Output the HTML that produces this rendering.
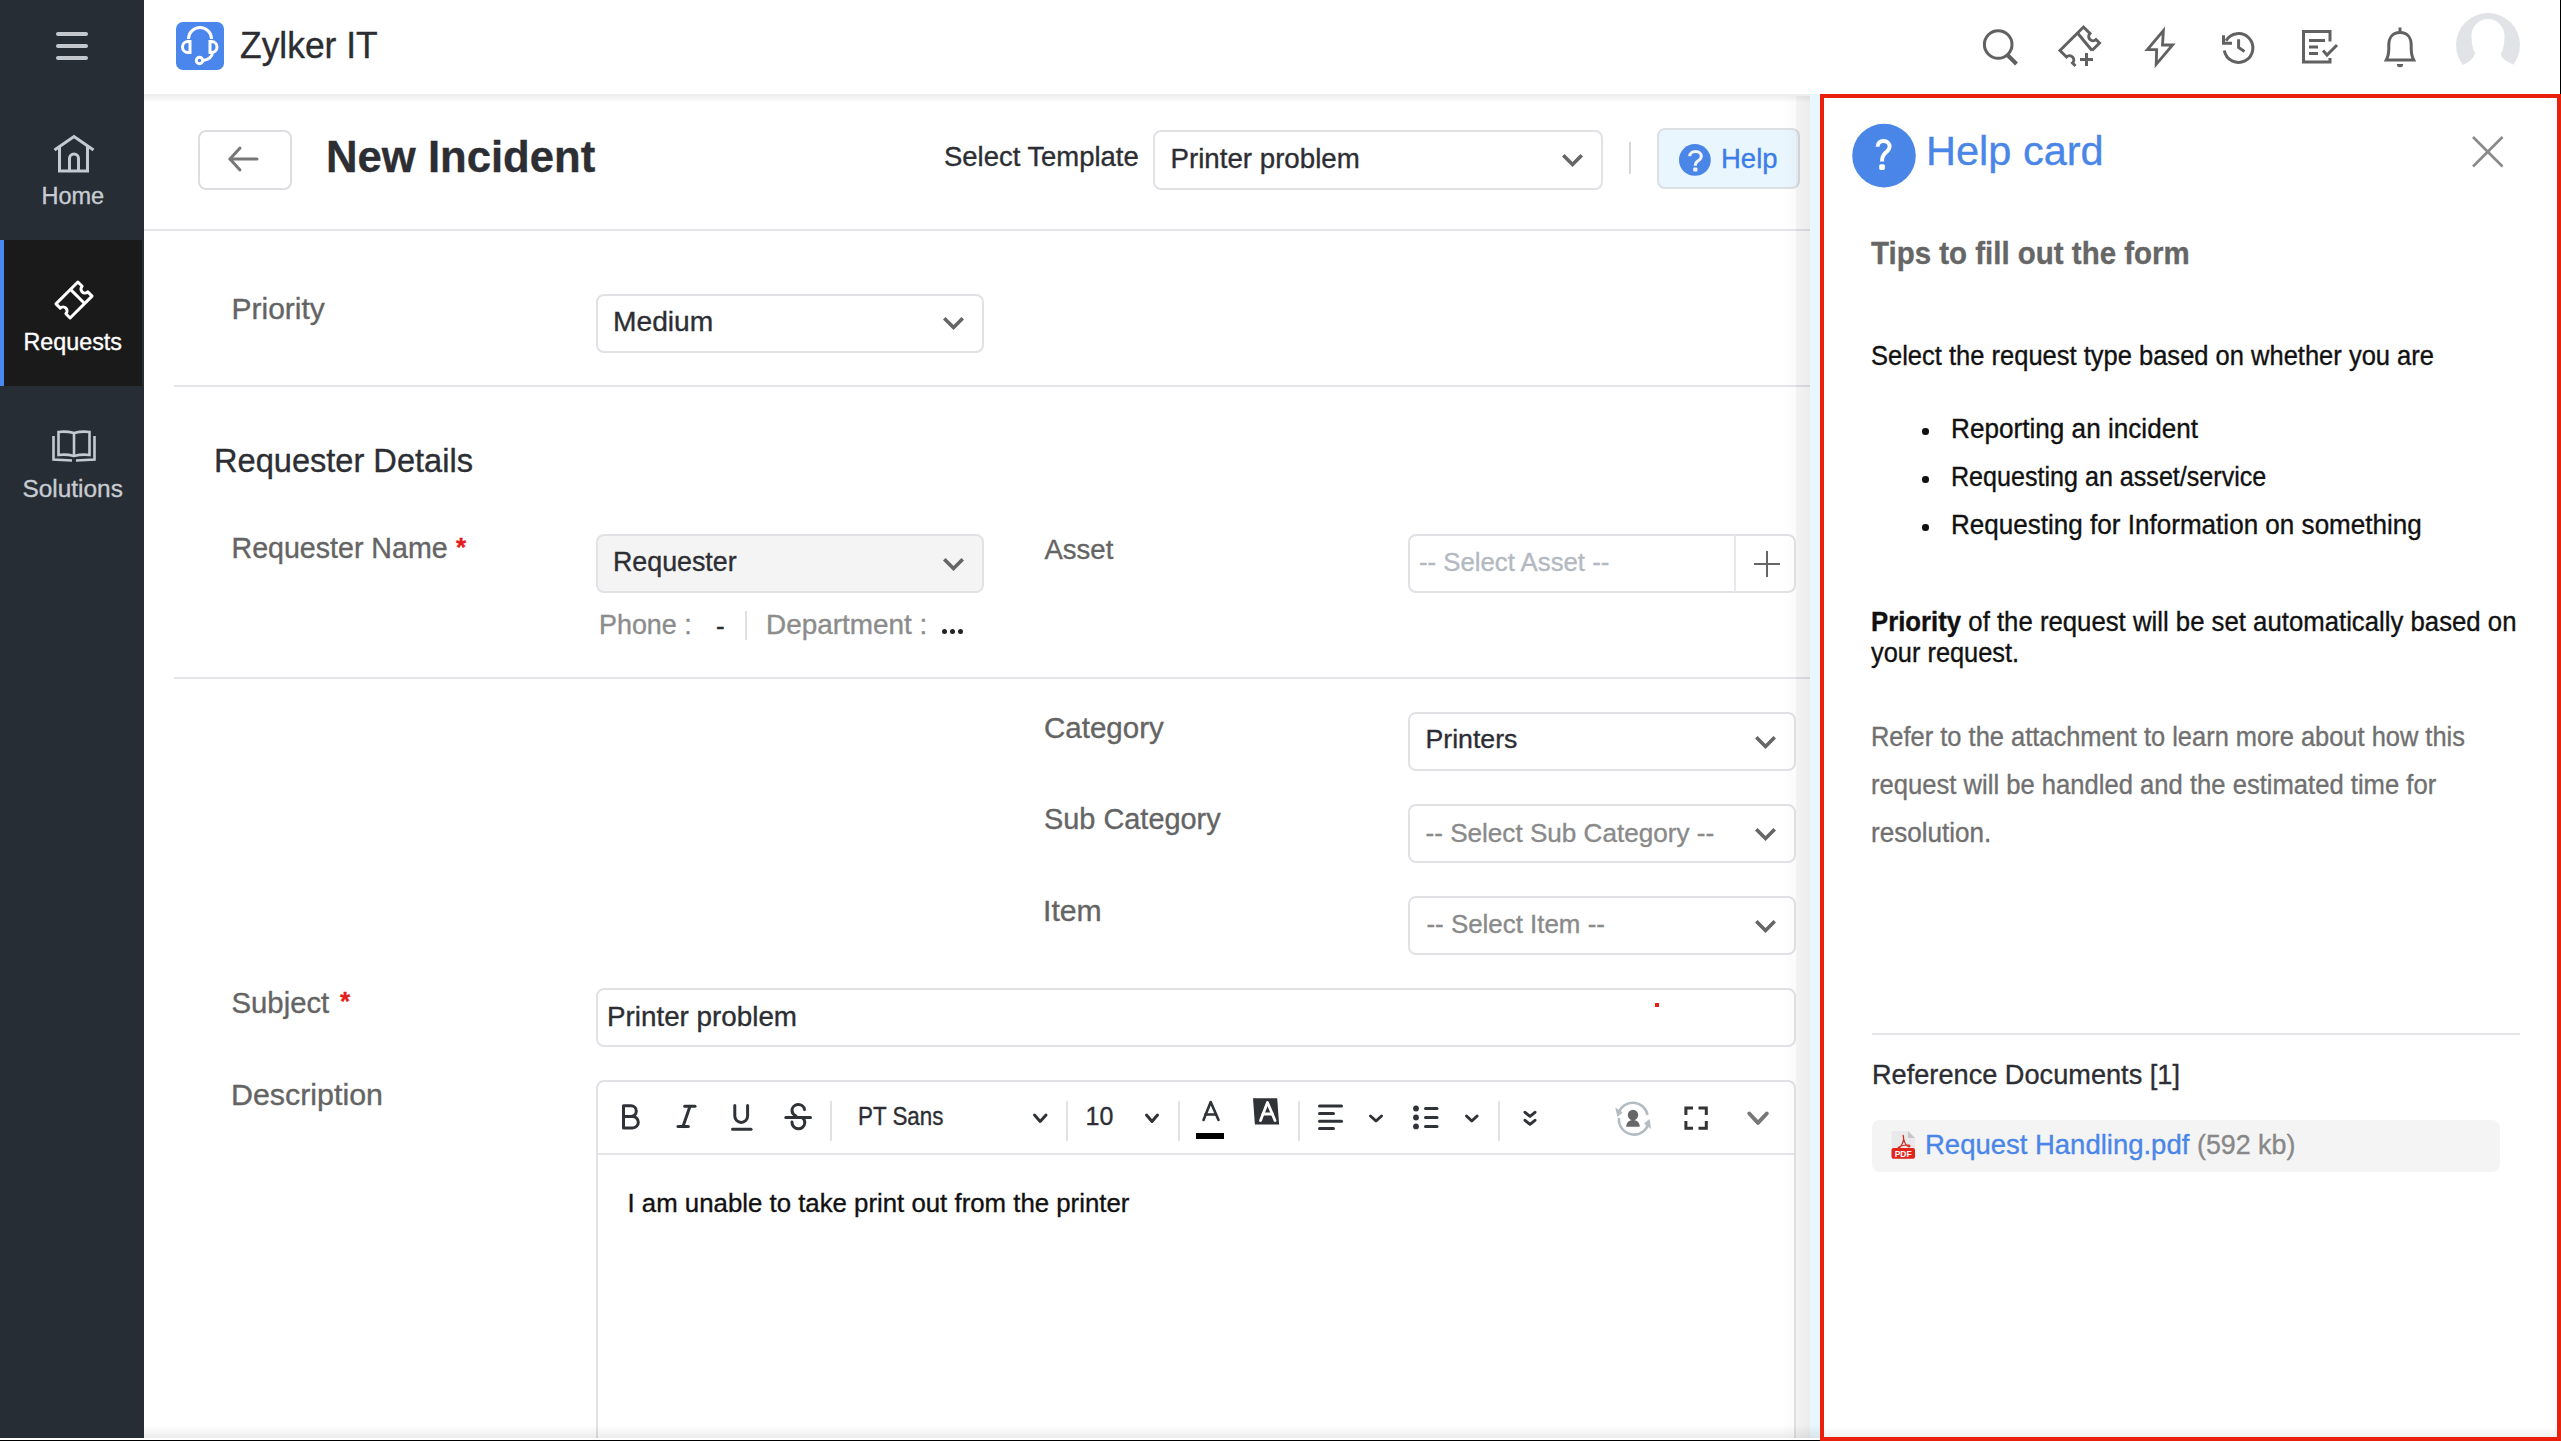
<!DOCTYPE html>
<html><head><meta charset="utf-8"><title>New Incident</title>
<style>
html,body{margin:0;padding:0;}
body{width:2561px;height:1441px;overflow:hidden;position:relative;background:#fff;font-family:"Liberation Sans", sans-serif;}
.t{position:absolute;white-space:nowrap;line-height:1;-webkit-text-stroke:0.35px currentColor;}
.r{position:absolute;box-sizing:border-box;}
svg.r{overflow:visible;}
</style></head><body>
<div class="r" style="left:0px;top:0px;width:144px;height:1438px;background:#262d35"></div>
<div class="r" style="left:56px;top:32px;width:32px;height:4px;background:#c3c8cf;border-radius:2px"></div>
<div class="r" style="left:56px;top:44px;width:32px;height:4px;background:#c3c8cf;border-radius:2px"></div>
<div class="r" style="left:56px;top:56px;width:32px;height:4px;background:#c3c8cf;border-radius:2px"></div>
<svg class="r" style="left:50px;top:130px;" width="48" height="48" viewBox="0 0 48 48"><g fill="none" stroke="#c5cad1" stroke-width="3"><polyline points="4.5,20 24,6.5 43.5,20"/><polyline points="9.5,16 9.5,41 37.5,41 37.5,16"/><path d="M19.5,41 V28.5 A4.5,4.5 0 0 1 28.5,28.5 V41"/></g></svg>
<div class="t" style="left:41.5px;top:185.1px;font-size:23.5px;color:#c8ccd2;font-weight:400;">Home</div>
<div class="r" style="left:0px;top:240px;width:142px;height:146px;background:#1a1a1a"></div>
<div class="r" style="left:0px;top:240px;width:4px;height:146px;background:#4a89f0"></div>
<svg class="r" style="left:50px;top:276px;" width="48" height="48" viewBox="0 0 48 48"><g transform="translate(24,24) rotate(-45)" fill="none" stroke="#fff" stroke-width="3" stroke-linejoin="round"><path d="M-15.5,-10 H15.5 V-4 A4,4 0 0 0 15.5,4 V10 H-15.5 V4 A4,4 0 0 0 -15.5,-4 Z"/><line x1="5" y1="-10" x2="5" y2="10"/></g></svg>
<div class="t" style="left:23.5px;top:330.6px;font-size:23.3px;color:#ffffff;font-weight:400;">Requests</div>
<svg class="r" style="left:50px;top:426px;" width="48" height="40" viewBox="0 0 48 40"><g fill="none" stroke="#c5cad1" stroke-width="2.6"><path d="M8.5,6 Q16,5 24,7 Q32,5 39.5,6 V29 Q32,28 24,30 Q16,28 8.5,29 Z"/><line x1="24" y1="7" x2="24" y2="30"/><polyline points="3.5,10 3.5,33.5 22,34.5"/><polyline points="44.5,10 44.5,33.5 26,34.5"/></g></svg>
<div class="t" style="left:22.5px;top:476.5px;font-size:24.4px;color:#c8ccd2;font-weight:400;">Solutions</div>
<div class="r" style="left:144px;top:94px;width:1676px;height:8px;background:linear-gradient(#ececec,#f3f3f3 45%,#fdfdfd)"></div>
<div class="r" style="left:2560px;top:0px;width:1px;height:94px;background:#000"></div>
<div class="r" style="left:176px;top:22px;width:48px;height:48px;background:#4a86eb;border-radius:7px"></div>
<svg class="r" style="left:176px;top:22px;" width="48" height="48" viewBox="0 0 48 48"><g fill="none" stroke="#fff" stroke-width="3"><path d="M12.5,17 A11.5,11.5 0 0 1 35.5,17"/><path d="M14,19.5 V30.5 H12 A5.5,5.5 0 0 1 12,19.5 Z"/><path d="M34,19.5 V30.5 H35.5 A5.5,5.5 0 0 0 35.5,19.5 Z"/><path d="M36.5,30.5 Q36,37 27,38.5"/><circle cx="23.5" cy="38.5" r="3.2"/></g></svg>
<div class="t" style="left:240.0px;top:28.1px;font-size:36.5px;color:#2b2d31;font-weight:400;transform:scaleX(0.97);transform-origin:0 0;">Zylker IT</div>
<svg class="r" style="left:1976px;top:20px;" width="48" height="52" viewBox="0 0 48 52"><g fill="none" stroke="#616161" stroke-width="3"><circle cx="22.2" cy="24.5" r="13.8"/></g><line x1="31.5" y1="35" x2="40.5" y2="44" stroke="#616161" stroke-width="4"/></svg>
<svg class="r" style="left:2050px;top:18px;" width="60" height="56" viewBox="0 0 60 56"><g fill="none" stroke="#616161" stroke-width="3" stroke-linejoin="miter"><path d="M25.5,48 L22.5,45 A4.2,4.2 0 0 0 16.5,39 L10,32.5 L33.5,9 L40,15.5 A4.2,4.2 0 0 0 46,21.5 L49.5,25 L42,32.5"/><line x1="27.5" y1="15" x2="42" y2="32.5"/></g><g stroke="#616161" stroke-width="3"><line x1="30" y1="41.5" x2="43" y2="41.5"/><line x1="36.5" y1="35" x2="36.5" y2="48"/></g></svg>
<svg class="r" style="left:2140px;top:22px;" width="40" height="50" viewBox="0 0 40 50"><path d="M24,5.5 L5,28 L16,28 L15.5,45.5 L35,22.5 L23,22.5 Z" transform="translate(20,25.5) scale(0.84) translate(-20,-25.5)" fill="none" stroke="#616161" stroke-width="3.4" stroke-linejoin="miter"/></svg>
<svg class="r" style="left:2214px;top:22px;" width="50" height="50" viewBox="0 0 50 50"><g fill="none" stroke="#616161" stroke-width="3"><path d="M10.3,28.5 A14.4,14.4 0 1 0 12,18.8"/><polyline points="9.5,13.3 9.5,21.3 18,21.3"/><polyline points="24.6,17.3 24.6,25.5 30.5,29.5"/></g></svg>
<svg class="r" style="left:2294px;top:22px;" width="50" height="50" viewBox="0 0 50 50"><g fill="none" stroke="#616161" stroke-width="3"><polyline points="36,19.5 36,9.5 9.5,9.5 9.5,40 36,40 36,36"/></g><g stroke="#616161" stroke-width="3" fill="none"><line x1="15" y1="18.5" x2="31" y2="18.5"/><line x1="15" y1="25" x2="24" y2="25"/><line x1="15" y1="31.5" x2="24" y2="31.5"/><polyline points="29,28.5 33,33 43,23"/></g></svg>
<svg class="r" style="left:2376px;top:22px;" width="50" height="50" viewBox="0 0 50 50"><g fill="none" stroke="#616161" stroke-width="3"><path d="M24,10.5 C16.5,10.5 12.8,16 12.8,23 L12.8,26 C12.8,31 12,35 10.3,38 L37.7,38 C36,35 35.2,31 35.2,26 L35.2,23 C35.2,16 31.5,10.5 24,10.5 Z"/><line x1="24" y1="5.5" x2="24" y2="9.5"/></g><path d="M20.8,42 L27.2,42 A3.2,3.2 0 0 1 20.8,42 Z" fill="#616161"/></svg>
<svg class="r" style="left:2452px;top:8px;" width="72" height="64" viewBox="0 0 72 64"><defs><clipPath id="avc"><rect x="0" y="0" width="72" height="57"/></clipPath></defs><g clip-path="url(#avc)"><circle cx="36" cy="37" r="32" fill="#e1e3e6"/></g><path d="M36,11 C27,11 20,18 19.5,27 C19.5,35 21,42 23,45 C22.5,49 19,53 12,56.5 L8,58 L64,58 L60,56 C53,53 48.5,49 49,45 C51.5,42 52.5,35 52.5,27 C52,18 45,11 36,11 Z" fill="#fff"/></svg>
<div class="r" style="left:198px;top:130px;width:94px;height:60px;border:2px solid #dcdee2;border-radius:8px;background:#fff"></div>
<svg class="r" style="left:226px;top:142px;" width="36" height="36" viewBox="0 0 36 36"><g fill="none" stroke="#777" stroke-width="3" stroke-linecap="round"><polyline points="14,6 4,17 14,28"/><line x1="4.5" y1="17" x2="31" y2="17"/></g></svg>
<div class="t" style="left:326.0px;top:134.9px;font-size:43.66px;color:#2c2e33;font-weight:700;">New Incident</div>
<div class="t" style="left:944.0px;top:142.8px;font-size:27.45px;color:#2c2e33;font-weight:400;">Select Template</div>
<div class="r" style="left:1153px;top:130px;width:450px;height:60px;border:2px solid #e0e2e5;border-radius:8px;background:#fff"></div>
<div class="t" style="left:1170.5px;top:145.1px;font-size:27.7px;color:#2c2e33;font-weight:400;">Printer problem</div>
<svg class="r" style="left:1559px;top:152px;margin-left:0.70px;margin-top:0.35px" width="27" height="19" viewBox="0 0 27 19"><polygon points="12.50,15.05 2.00,4.55 4.55,2.00 12.50,9.95 20.45,2.00 23.00,4.55" fill="#666"/></svg>
<div class="r" style="left:1629px;top:142px;width:2px;height:32px;background:#d8d8d8"></div>
<div class="r" style="left:1657px;top:128px;width:143px;height:61px;border:2px solid #dcdfe3;border-radius:8px;background:#eaf6fd"></div>
<svg class="r" style="left:1679px;top:143px;" width="32" height="34" viewBox="0 0 32 34"><circle cx="15.9" cy="16.9" r="15.9" fill="#4a86e8"/><path d="M10.8,13.2 C10.8,10.2 13.3,8.5 16.6,8.5 C20,8.5 22.3,10.5 22.3,13.2 C22.3,15.8 20.5,16.9 18.8,18.1 C17,19.4 16.3,20.6 16.3,22.8" fill="none" stroke="#f2f2f2" stroke-width="3"/><rect x="14.2" y="24.4" width="4.2" height="4.2" rx="1.2" fill="#f2f2f2"/></svg>
<div class="t" style="left:1721.0px;top:145.1px;font-size:27.5px;color:#3b7de8;font-weight:400;">Help</div>
<div class="r" style="left:144px;top:229px;width:1666px;height:2px;background:#e3e5e8"></div>
<div class="t" style="left:231.5px;top:293.6px;font-size:30px;color:#646464;font-weight:400;">Priority</div>
<div class="r" style="left:596px;top:294px;width:388px;height:59px;border:2px solid #e0e2e5;border-radius:8px;background:#fff"></div>
<div class="t" style="left:613.0px;top:306.6px;font-size:28.2px;color:#2c2e33;font-weight:400;">Medium</div>
<svg class="r" style="left:940px;top:315px;margin-left:0.85px;margin-top:0.45px" width="27" height="19" viewBox="0 0 27 19"><polygon points="12.50,15.05 2.00,4.55 4.55,2.00 12.50,9.95 20.45,2.00 23.00,4.55" fill="#666"/></svg>
<div class="r" style="left:174px;top:385px;width:1636px;height:2px;background:#e3e5e8"></div>
<div class="t" style="left:214.0px;top:445.1px;font-size:32.6px;color:#2c2e33;font-weight:400;">Requester Details</div>
<div class="t" style="left:231.5px;top:534.3px;font-size:28.6px;color:#646464;font-weight:400;">Requester Name</div>
<div class="t" style="left:456.0px;top:533.5px;font-size:26px;color:#e31c1c;font-weight:700;">*</div>
<div class="r" style="left:596px;top:534px;width:388px;height:59px;border:2px solid #e0e2e5;border-radius:8px;background:#f4f4f4"></div>
<div class="t" style="left:613.0px;top:548.5px;font-size:26.8px;color:#2c2e33;font-weight:400;">Requester</div>
<svg class="r" style="left:940px;top:555px;margin-left:0.50px;margin-top:0.95px" width="27" height="19" viewBox="0 0 27 19"><polygon points="12.50,15.05 2.00,4.55 4.55,2.00 12.50,9.95 20.45,2.00 23.00,4.55" fill="#666"/></svg>
<div class="t" style="left:599.0px;top:611.7px;font-size:26.9px;color:#8c8c8c;font-weight:400;">Phone :</div>
<div class="t" style="left:716.0px;top:612.5px;font-size:26px;color:#2c2e33;font-weight:400;">-</div>
<div class="r" style="left:745px;top:611px;width:2px;height:29px;background:#e0e0e0"></div>
<div class="t" style="left:766.0px;top:610.9px;font-size:27.9px;color:#8c8c8c;font-weight:400;">Department :</div>
<div class="r" style="left:942.0px;top:628.5px;width:5px;height:5px;background:#222;border-radius:50%"></div>
<div class="r" style="left:950.0px;top:628.5px;width:5px;height:5px;background:#222;border-radius:50%"></div>
<div class="r" style="left:958.0px;top:628.5px;width:5px;height:5px;background:#222;border-radius:50%"></div>
<div class="r" style="left:174px;top:677px;width:1636px;height:2px;background:#e3e5e8"></div>
<div class="t" style="left:1044.5px;top:535.7px;font-size:27.5px;color:#646464;font-weight:400;">Asset</div>
<div class="r" style="left:1408px;top:534px;width:388px;height:59px;border:2px solid #e0e2e5;border-radius:8px;background:#fff"></div>
<div class="r" style="left:1734px;top:535px;width:2px;height:57px;background:#e6e8eb"></div>
<div class="r" style="left:1754px;top:563px;width:26px;height:2px;background:#666"></div>
<div class="r" style="left:1766px;top:551px;width:2px;height:26px;background:#666"></div>
<div class="t" style="left:1419.0px;top:550.0px;font-size:25.75px;color:#b4b9c1;font-weight:400;">-- Select Asset --</div>
<div class="t" style="left:1044.0px;top:712.5px;font-size:29.5px;color:#646464;font-weight:400;">Category</div>
<div class="r" style="left:1408px;top:712px;width:388px;height:59px;border:2px solid #e0e2e5;border-radius:8px;background:#fff"></div>
<div class="t" style="left:1425.5px;top:726.1px;font-size:26.7px;color:#2c2e33;font-weight:400;">Printers</div>
<svg class="r" style="left:1753px;top:733px;margin-left:0.15px;margin-top:0.65px" width="27" height="19" viewBox="0 0 27 19"><polygon points="12.50,15.05 2.00,4.55 4.55,2.00 12.50,9.95 20.45,2.00 23.00,4.55" fill="#666"/></svg>
<div class="t" style="left:1044.0px;top:805.0px;font-size:28.9px;color:#646464;font-weight:400;">Sub Category</div>
<div class="r" style="left:1408px;top:804px;width:388px;height:59px;border:2px solid #e0e2e5;border-radius:8px;background:#fff"></div>
<div class="t" style="left:1425.5px;top:819.5px;font-size:26.1px;color:#8a8a8a;font-weight:400;">-- Select Sub Category --</div>
<svg class="r" style="left:1753px;top:826px;margin-left:0.15px;margin-top:0.15px" width="27" height="19" viewBox="0 0 27 19"><polygon points="12.50,15.05 2.00,4.55 4.55,2.00 12.50,9.95 20.45,2.00 23.00,4.55" fill="#666"/></svg>
<div class="t" style="left:1043.0px;top:895.8px;font-size:30.2px;color:#646464;font-weight:400;">Item</div>
<div class="r" style="left:1408px;top:896px;width:388px;height:59px;border:2px solid #e0e2e5;border-radius:8px;background:#fff"></div>
<div class="t" style="left:1426.5px;top:912.1px;font-size:25.9px;color:#8a8a8a;font-weight:400;">-- Select Item --</div>
<svg class="r" style="left:1753px;top:918px;margin-left:0.15px;margin-top:0.45px" width="27" height="19" viewBox="0 0 27 19"><polygon points="12.50,15.05 2.00,4.55 4.55,2.00 12.50,9.95 20.45,2.00 23.00,4.55" fill="#666"/></svg>
<div class="t" style="left:231.5px;top:988.3px;font-size:29.3px;color:#646464;font-weight:400;">Subject</div>
<div class="t" style="left:340.0px;top:988.1px;font-size:26px;color:#e31c1c;font-weight:700;">*</div>
<div class="r" style="left:596px;top:988px;width:1200px;height:59px;border:2px solid #e0e2e5;border-radius:8px;background:#fff"></div>
<div class="t" style="left:607.0px;top:1002.5px;font-size:27.8px;color:#2c2e33;font-weight:400;">Printer problem</div>
<div class="r" style="left:1655px;top:1003px;width:4px;height:4px;background:#e8200c"></div>
<div class="t" style="left:231.0px;top:1079.3px;font-size:30.4px;color:#646464;font-weight:400;">Description</div>
<div class="r" style="left:596px;top:1080px;width:1200px;height:380px;border:2px solid #e0e2e5;border-radius:8px;background:#fff"></div>
<div class="r" style="left:598px;top:1153px;width:1196px;height:2px;background:#e3e5e8"></div>
<svg class="r" style="left:612px;top:1096px;" width="40" height="40" viewBox="0 0 40 40"><path d="M11.5,9.8 H19 A5.3,5.3 0 0 1 19,20.4 H11.5 Z M11.5,20.4 H20.5 A5.8,5.8 0 0 1 20.5,32 H11.5 Z" fill="none" stroke="#2f3237" stroke-width="3" stroke-linejoin="round"/></svg>
<svg class="r" style="left:668px;top:1096px;" width="40" height="40" viewBox="0 0 40 40"><g fill="none" stroke="#2f3237" stroke-width="3" stroke-linecap="round"><line x1="16.7" y1="10.3" x2="27" y2="10.3"/><line x1="10" y1="30.6" x2="20.3" y2="30.6"/><line x1="22" y1="10.3" x2="15" y2="30.6"/></g></svg>
<svg class="r" style="left:722px;top:1096px;" width="40" height="40" viewBox="0 0 40 40"><g fill="none" stroke="#2f3237" stroke-width="3" stroke-linecap="round"><path d="M12.8,9.5 V20 A6.4,6.4 0 0 0 25.6,20 V9.5"/><line x1="10.5" y1="33.2" x2="29" y2="33.2"/></g></svg>
<svg class="r" style="left:778px;top:1096px;" width="40" height="40" viewBox="0 0 40 40"><g fill="none" stroke="#2f3237" stroke-width="3" stroke-linecap="round"><path d="M26.5,13.5 A6.3,6 0 0 0 14,14.5 Q14,18 18,20"/><path d="M14,26 A6.3,6.2 0 0 0 26.8,27 Q27,23.5 24,21.5"/><line x1="7.8" y1="21.5" x2="32.5" y2="21.5"/></g></svg>
<div class="r" style="left:830px;top:1101px;width:2px;height:40px;background:#e0e2e5"></div>
<div class="t" style="left:857.5px;top:1103.2px;font-size:26px;color:#2c2e33;font-weight:400;transform:scaleX(0.86);transform-origin:0 0;">PT Sans</div>
<svg class="r" style="left:1029px;top:1109px;" width="24" height="19" viewBox="0 0 24 19"><polyline points="5.5,6.1 11.2,12.5 17.0,6.1" fill="none" stroke="#2f3237" stroke-width="3" stroke-linecap="round" stroke-linejoin="round"/></svg>
<div class="r" style="left:1066px;top:1101px;width:2px;height:40px;background:#e0e2e5"></div>
<div class="t" style="left:1085.5px;top:1104.0px;font-size:25px;color:#2c2e33;font-weight:400;">10</div>
<svg class="r" style="left:1141px;top:1109px;" width="24" height="19" viewBox="0 0 24 19"><polyline points="5.5,6.1 11.0,12.5 16.5,6.1" fill="none" stroke="#2f3237" stroke-width="3" stroke-linecap="round" stroke-linejoin="round"/></svg>
<div class="r" style="left:1178px;top:1101px;width:2px;height:40px;background:#e0e2e5"></div>
<svg class="r" style="left:1196px;top:1096px;" width="30" height="44" viewBox="0 0 30 44"><g fill="none" stroke="#2f3237" stroke-width="2.6" stroke-linecap="round" stroke-linejoin="round"><polyline points="7.5,24 14.7,6 22.5,24"/><line x1="9.5" y1="18.5" x2="20" y2="18.5"/></g><rect x="0" y="37" width="28" height="6" fill="#000"/></svg>
<svg class="r" style="left:1250px;top:1096px;" width="32" height="32" viewBox="0 0 32 32"><polygon points="3,2.2 27.2,2.2 29.1,28.4 4.9,28.4" fill="#2f3237"/><g fill="none" stroke="#fff" stroke-width="2.8" stroke-linecap="round" stroke-linejoin="round"><polyline points="10.5,24.5 17.5,6.5 25,24.5"/><line x1="13" y1="18" x2="22.5" y2="18"/></g></svg>
<div class="r" style="left:1298px;top:1101px;width:2px;height:40px;background:#e0e2e5"></div>
<svg class="r" style="left:1314px;top:1100px;" width="34" height="34" viewBox="0 0 34 34"><g stroke="#2f3237" stroke-width="3" stroke-linecap="round"><line x1="5.5" y1="6" x2="27.5" y2="6"/><line x1="5.5" y1="13.4" x2="19.5" y2="13.4"/><line x1="5.5" y1="21.2" x2="27.5" y2="21.2"/><line x1="5.5" y1="28.6" x2="19.5" y2="28.6"/></g></svg>
<svg class="r" style="left:1365px;top:1110px;" width="24" height="18" viewBox="0 0 24 18"><polyline points="5.5,6.0 11.0,11.0 16.5,6.0" fill="none" stroke="#2f3237" stroke-width="3" stroke-linecap="round" stroke-linejoin="round"/></svg>
<svg class="r" style="left:1410px;top:1100px;" width="34" height="34" viewBox="0 0 34 34"><g fill="#2f3237"><circle cx="6" cy="8.5" r="2.9"/><circle cx="6" cy="17.5" r="2.9"/><circle cx="6" cy="26.4" r="2.9"/></g><g stroke="#2f3237" stroke-width="3" stroke-linecap="round"><line x1="15.5" y1="8.5" x2="27" y2="8.5"/><line x1="15.5" y1="17.5" x2="27" y2="17.5"/><line x1="15.5" y1="26.4" x2="27" y2="26.4"/></g></svg>
<svg class="r" style="left:1461px;top:1110px;" width="23" height="18" viewBox="0 0 23 18"><polyline points="5.5,6.0 10.8,11.0 16.1,6.0" fill="none" stroke="#2f3237" stroke-width="3" stroke-linecap="round" stroke-linejoin="round"/></svg>
<div class="r" style="left:1498px;top:1101px;width:2px;height:40px;background:#e0e2e5"></div>
<svg class="r" style="left:1519px;top:1106px;" width="23" height="17" viewBox="0 0 23 17"><polyline points="6.0,6.3 11.0,10.3 16.0,6.3" fill="none" stroke="#2f3237" stroke-width="3" stroke-linecap="round" stroke-linejoin="round"/></svg>
<svg class="r" style="left:1519px;top:1114px;" width="23" height="17" viewBox="0 0 23 17"><polyline points="6.0,6.3 11.0,10.3 16.0,6.3" fill="none" stroke="#2f3237" stroke-width="3" stroke-linecap="round" stroke-linejoin="round"/></svg>
<svg class="r" style="left:1612px;top:1097px;" width="44" height="44" viewBox="0 0 44 44"><g fill="none" stroke="#b3bbc3" stroke-width="2.6"><path d="M6.5,16 A15,15 0 0 1 35.5,18"/><path d="M37,24 A15,15 0 0 1 7,21"/></g><polygon points="3.2,10.5 10.5,15.5 5.5,20" fill="#b3bbc3"/><polygon points="39,32 32,26.5 37.5,22" fill="#b3bbc3"/><circle cx="21" cy="18" r="5.2" fill="#676767"/><path d="M14.2,29.7 Q14.5,23.5 21,22.8 Q27.5,23.5 27.8,29.7 Z" fill="#676767"/></svg>
<svg class="r" style="left:1682px;top:1104px;" width="28" height="28" viewBox="0 0 28 28"><g fill="none" stroke="#333" stroke-width="3" stroke-linecap="butt"><polyline points="3.9,11 3.9,3.9 11,3.9"/><polyline points="16.5,3.9 24.3,3.9 24.3,11"/><polyline points="3.9,17 3.9,24.2 11,24.2"/><polyline points="16.5,24.2 24.3,24.2 24.3,17"/></g></svg>
<svg class="r" style="left:1743px;top:1107px;" width="31" height="23" viewBox="0 0 31 23"><polyline points="6.3,6.5 15.0,15.8 23.8,6.5" fill="none" stroke="#777" stroke-width="4" stroke-linecap="round" stroke-linejoin="round"/></svg>
<div class="t" style="left:627.5px;top:1191.1px;font-size:25.8px;color:#111;font-weight:400;">I am unable to take print out from the printer</div>
<div class="r" style="left:1782px;top:96px;width:28px;height:1342px;background:linear-gradient(90deg,rgba(0,0,0,0),rgba(0,0,0,0.015) 50%,rgba(0,0,0,0.05) 52%,rgba(0,0,0,0.075))"></div>
<div class="r" style="left:1810px;top:94px;width:10px;height:1344px;background:#e8f7fd"></div>
<div class="r" style="left:144px;top:1425px;width:1676px;height:13px;background:linear-gradient(rgba(0,0,0,0),rgba(0,0,0,0.075))"></div>
<div class="r" style="left:1820px;top:94px;width:741px;height:1347px;border:4px solid #e8200c;background:#fff"></div>
<div class="r" style="left:1824px;top:1427px;width:733px;height:10px;background:linear-gradient(rgba(0,0,0,0),rgba(0,0,0,0.06))"></div>
<svg class="r" style="left:1850px;top:122px;" width="68" height="68" viewBox="0 0 68 68"><circle cx="34" cy="33.6" r="31.8" fill="#4a86e8"/><path d="M27.6,24.8 C27.6,21 30,19 33.5,19 C37.2,19 39.6,21.5 39.6,24.5 C39.6,27.5 37.5,29 35.5,30.8 C33.3,32.8 32,34.5 32,39.4" fill="none" stroke="#fff" stroke-width="3.9"/><rect x="29.2" y="42.2" width="5.7" height="5.7" rx="1.6" fill="#fff"/></svg>
<div class="t" style="left:1926.0px;top:130.4px;font-size:41.5px;color:#4a86e8;font-weight:400;">Help card</div>
<svg class="r" style="left:2466px;top:130px;" width="44" height="44" viewBox="0 0 44 44"><g stroke="#8a8a8a" stroke-width="2.6"><line x1="7" y1="7" x2="36.5" y2="36.5"/><line x1="36.5" y1="7" x2="7" y2="36.5"/></g></svg>
<div class="t" style="left:1870.5px;top:236.8px;font-size:32px;color:#666666;font-weight:700;transform:scaleX(0.9210);transform-origin:0 0;">Tips to fill out the form</div>
<div class="t" style="left:1871.0px;top:342.6px;font-size:26.9px;color:#111111;font-weight:400;transform:scaleX(0.9486);transform-origin:0 0;">Select the request type based on whether you are</div>
<div class="r" style="left:1922px;top:428px;width:6.5px;height:6.5px;background:#111;border-radius:50%"></div>
<div class="t" style="left:1950.5px;top:415.8px;font-size:26.9px;color:#111111;font-weight:400;transform:scaleX(0.9720);transform-origin:0 0;">Reporting an incident</div>
<div class="r" style="left:1922px;top:476px;width:6.5px;height:6.5px;background:#111;border-radius:50%"></div>
<div class="t" style="left:1950.5px;top:463.7px;font-size:26.9px;color:#111111;font-weight:400;transform:scaleX(0.9333);transform-origin:0 0;">Requesting an asset/service</div>
<div class="r" style="left:1922px;top:524px;width:6.5px;height:6.5px;background:#111;border-radius:50%"></div>
<div class="t" style="left:1950.5px;top:511.5px;font-size:26.9px;color:#111111;font-weight:400;transform:scaleX(0.9692);transform-origin:0 0;">Requesting for Information on something</div>
<div class="t" style="left:1871.0px;top:609.0px;font-size:26.9px;color:#111111;font-weight:400;transform:scaleX(0.9575);transform-origin:0 0;"><b>Priority</b> of the request will be set automatically based on</div>
<div class="t" style="left:1871.0px;top:640.0px;font-size:26.9px;color:#111111;font-weight:400;transform:scaleX(0.9439);transform-origin:0 0;">your request.</div>
<div class="t" style="left:1871.0px;top:723.9px;font-size:26.9px;color:#707070;font-weight:400;transform:scaleX(0.9461);transform-origin:0 0;">Refer to the attachment to learn more about how this</div>
<div class="t" style="left:1871.0px;top:772.1px;font-size:26.9px;color:#707070;font-weight:400;transform:scaleX(0.9524);transform-origin:0 0;">request will be handled and the estimated time for</div>
<div class="t" style="left:1871.0px;top:819.8px;font-size:26.9px;color:#707070;font-weight:400;transform:scaleX(0.9685);transform-origin:0 0;">resolution.</div>
<div class="r" style="left:1872px;top:1033px;width:648px;height:2px;background:#e3e5e8"></div>
<div class="t" style="left:1871.5px;top:1060.5px;font-size:27.5px;color:#2c2e33;font-weight:400;transform:scaleX(0.9877);transform-origin:0 0;">Reference Documents [1]</div>
<div class="r" style="left:1872px;top:1120px;width:628px;height:52px;background:#f4f4f4;border-radius:8px"></div>
<svg class="r" style="left:1889px;top:1129px;" width="30" height="32" viewBox="0 0 30 32"><path d="M2.5,2 H19 L26,9 V29.5 H2.5 Z" fill="#e9e9ec"/><path d="M19,2 V9 H26 Z" fill="#c8c8cc"/><path d="M14,6 Q16,10 12,17 Q9,21 8,20 Q10,16 20,16 Q22,17 20,18 Q15,16 14,6 Z" fill="none" stroke="#d3261e" stroke-width="1.2"/><rect x="2.5" y="19" width="23.5" height="10.7" rx="2" fill="#e3241b"/><text x="14.2" y="28" text-anchor="middle" font-family="Liberation Sans" font-weight="700" font-size="8.5" fill="#fff">PDF</text></svg>
<div class="t" style="left:1925.0px;top:1130.6px;font-size:27.4px;color:#4a86e8;font-weight:400;transform:scaleX(1.0033);transform-origin:0 0;">Request Handling.pdf</div>
<div class="t" style="left:2197.0px;top:1130.6px;font-size:27.4px;color:#888888;font-weight:400;transform:scaleX(0.9789);transform-origin:0 0;">(592 kb)</div>
<div class="r" style="left:0px;top:1438px;width:1820px;height:2px;background:#fff"></div>
<div class="r" style="left:0px;top:1440px;width:1820px;height:1px;background:#000"></div>
</body></html>
